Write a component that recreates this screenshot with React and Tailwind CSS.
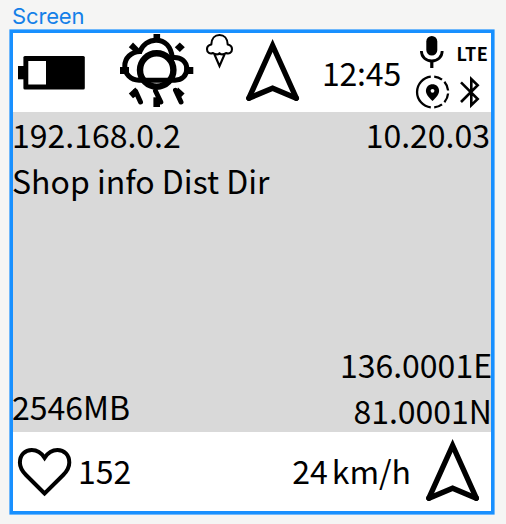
import React from "react";

function Arrow() {
  return (
    <svg className="size-20 shrink-0" viewBox="0 0 80 80" fill="none" stroke="#000" strokeWidth="5.4">
      <path d="M16.9 66.2 L40.6 13.5 L64.3 66.2" strokeLinecap="round" strokeMiterlimit="10" />
      <path d="M16.9 66.2 L40.6 56.2 L64.3 66.2" strokeLinecap="round" />
    </svg>
  );
}

function Battery() {
  return (
    <svg className="h-20 w-20 shrink-0" viewBox="0 0 80 80">
      <rect x="6" y="34" width="6" height="13.3" />
      <rect x="11.4" y="24" width="61.4" height="33.5" rx="1.5" />
      <rect x="16.3" y="29" width="17.7" height="23.5" fill="#fff" />
    </svg>
  );
}

function Weather() {
  return (
    <svg className="ml-[23px] size-20 shrink-0" viewBox="115 32 80 80" fill="none" stroke="#000" strokeWidth="5">
      <circle cx="156.7" cy="70" r="16.7" strokeWidth="6.4" />
      <path d="M139 80.2 C130.5 80.2 124.8 74 124.8 66 C124.8 58 131 51.8 140 51.5 C142.5 44.5 149 40.2 156 40.2 C165 40.2 171 46.5 172.3 57.6 C180.5 56.5 186.8 61.5 186.8 69 C186.8 75.5 182 80.2 175 80.2 Z" />
      <g fill="#000" stroke="none">
        <rect x="153.5" y="34" width="6.6" height="8" />
        <rect x="120" y="67" width="9" height="7" />
        <rect x="184.3" y="67" width="9" height="7" />
        <rect x="153.4" y="97.3" width="6.6" height="9.7" />
        <path d="M133 42.6 L140 49.6 L135.5 53 L128.8 47.2 Z" />
        <path d="M179.8 42.6 L184.8 47.2 L179.8 52 L174.8 47.2 Z" />
        <path d="M135.5 87.5 L128.8 93.5 L133 98.2 L139 94 Z" />
        <path d="M178 87.5 L184.6 93.5 L180 98.2 L175 94 Z" />
      </g>
      <path d="M135.5 91 L140.5 102 M155.5 91 L160.8 102 M175.5 90.3 L181 102" strokeWidth="5" strokeLinecap="round" />
    </svg>
  );
}

function IceCream() {
  return (
    <svg className="h-20 w-9 shrink-0" viewBox="202 32 36 80" fill="none" stroke="#000" strokeWidth="2.1">
      <path d="M211.3 44.5 C211.5 38.3 215 35 219.5 35 C224 35 227.5 38.3 227.7 44.5 C230.6 45 232 47 232 49.2 C232 52.7 229 54.3 226 53 C224 54.8 221 54.8 219.5 53.2 C218 54.8 215 54.8 213 53 C210 54.3 207 52.7 207 49.2 C207 47 208.4 45 211.3 44.5 Z" strokeLinejoin="round" />
      <path d="M214.3 54 L219.5 66 L224.7 54" />
    </svg>
  );
}

function Microphone() {
  return (
    <svg className="size-10" viewBox="412 32 40 40" fill="none" stroke="#000">
      <rect x="426.3" y="36" width="11" height="19.6" rx="5.5" fill="#000" stroke="none" />
      <path d="M421.4 51 C421.4 57 426 61 431.8 61 C437.6 61 442.2 57 442.2 51" strokeWidth="2.8" />
      <path d="M431.8 60v8" strokeWidth="3.2" />
    </svg>
  );
}

function ShareLocation() {
  return (
    <svg className="size-10" viewBox="412 72 40 40" fill="none" stroke="#000" strokeWidth="2.3">
      <path d="M430.8 76.6 A15.5 15.5 0 0 0 430.8 107.4" />
      <path d="M434.2 76.6 A15.5 15.5 0 0 1 442 79.6" />
      <path d="M444.4 81.8 A15.5 15.5 0 0 1 448.1 90.5" />
      <path d="M448.1 93.5 A15.5 15.5 0 0 1 444.4 102.2" />
      <path d="M442 104.4 A15.5 15.5 0 0 1 434.2 107.4" />
      <path d="M432.5 101 C428 96.8 425.9 93.8 425.9 90.8 C425.9 86.8 428.9 84.2 432.5 84.2 C436.1 84.2 439.1 86.8 439.1 90.8 C439.1 93.8 437 96.8 432.5 101 Z" fill="#000" stroke="none" />
      <circle cx="432.5" cy="90.8" r="1.9" fill="#fff" stroke="none" />
    </svg>
  );
}

function Bluetooth() {
  return (
    <svg className="size-10" viewBox="452 72 40 40" fill="none" stroke="#000" strokeWidth="2.6">
      <path d="M461 82.3 L477.7 99 L471.3 105.2 V79 L477.7 85.2 L461 102" strokeMiterlimit="10" />
    </svg>
  );
}

function Heart() {
  return (
    <svg className="h-20 w-16 shrink-0" viewBox="12 432 64 80" fill="none" stroke="#000" strokeWidth="4">
      <path d="M44.6 493.5 L26 475 C22 471 19.9 467 19.9 462.5 C19.9 455 25 450 31.8 450 C37.5 450 41.5 453 44.6 457.8 C47.7 453 51.7 450 57.4 450 C64.2 450 69.3 455 69.3 462.5 C69.3 467 67.2 471 63.2 475 Z" />
    </svg>
  );
}

export default function App() {
  return (
    <div className="h-[524px] w-[506px] overflow-hidden bg-[#f5f5f4] font-['Noto_Sans_CJK_JP','Noto_Sans',sans-serif] text-[32px] leading-[46px] text-black">
      <div className="h-8 pl-3 pt-[5px] font-['Inter',sans-serif] text-[22px] leading-[23px] tracking-[-0.15px] text-[#1480e8]">Screen</div>
      <main className="relative ml-3 flex size-[480px] flex-col bg-white">
        <header className="flex h-20 items-center">
          <Battery />
          <Weather />
          <div className="ml-[7px] flex">
            <IceCream />
          </div>
          <div className="-ml-[6px] flex">
            <Arrow />
          </div>
          <div className="ml-[10px] w-[90px] whitespace-nowrap tracking-[-0.2px]">12:45</div>
          <div className="grid size-20 shrink-0 grid-cols-2">
            <Microphone />
            <div className="flex size-10 items-center justify-center pl-px pt-px font-['Noto_Sans_CJK_JP',sans-serif] text-[18px] font-bold leading-10 tracking-[0.5px]">LTE</div>
            <ShareLocation />
            <Bluetooth />
          </div>
        </header>
        <section className="flex h-80 flex-col justify-between bg-[#d9d9d9]">
          <div className="-mt-px">
            <div className="flex justify-between">
              <span>192.168.0.2</span>
              <span className="mr-0.5">10.20.03</span>
            </div>
            <div>Shop info Dist Dir</div>
          </div>
          <div className="-mb-px flex items-end justify-between">
            <span className="mb-1">2546MB</span>
            <div className="text-right">
              <div>136.0001E</div>
              <div>81.0001N</div>
            </div>
          </div>
        </section>
        <footer className="flex h-20 items-center">
          <Heart />
          <span className="ml-[2px] pb-1">152</span>
          <div className="ml-auto flex items-center">
            <span className="pb-1">24</span>
            <span className="ml-1 mr-px pb-1">km/h</span>
            <Arrow />
          </div>
        </footer>
        <div className="pointer-events-none absolute -inset-[2px] border-[3px] border-[#1890ff] ring-[0.6px] ring-[#1890ff]" />
      </main>
    </div>
  );
}
